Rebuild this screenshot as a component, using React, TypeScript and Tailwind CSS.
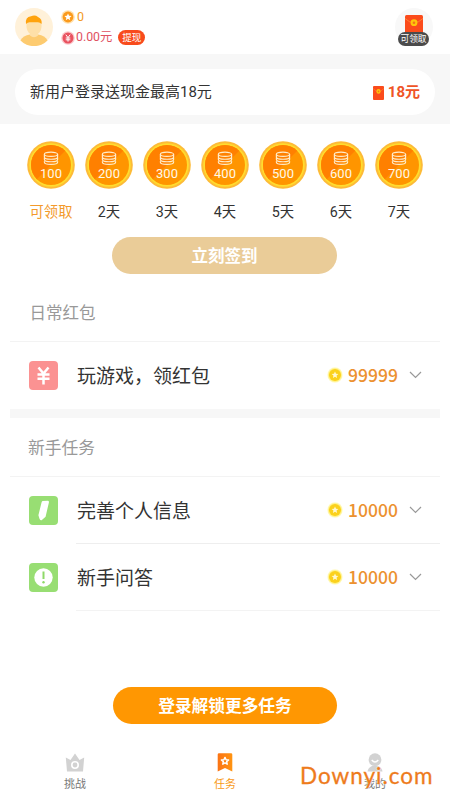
import type { ReactNode } from "react";
import clsx from "clsx";

const REWARDS = [
  { amount: 100, label: "可领取" },
  { amount: 200, label: "2天" },
  { amount: 300, label: "3天" },
  { amount: 400, label: "4天" },
  { amount: 500, label: "5天" },
  { amount: 600, label: "6天" },
  { amount: 700, label: "7天" },
];

const STAR = "M0 -5 L1.5 -1.7 L5 -1.4 L2.3 0.9 L3.1 4.4 L0 2.5 L-3.1 4.4 L-2.3 0.9 L-5 -1.4 L-1.5 -1.7 Z";

function Avatar() {
  return (
    <svg width="38" height="38" viewBox="0 0 38 38">
      <circle cx="19" cy="19" r="19" fill="#fff1d9" />
      <path d="M5.500 32.500 Q8 27.500 15 26.500 H23 Q30 27.500 32.500 32.500 A19 19 0 0 1 5.500 32.500Z" fill="#fdcb70" />
      <path d="M15 23 H23 V27.500 Q19 31 15 27.500Z" fill="#fee0a8" />
      <path d="M11.500 14 H26.500 V19 Q26 26 19 27 Q12 26 11.500 19Z" fill="#fee0a8" />
      <path d="M11 16 Q10 9 16 8.300 Q20 6.500 23 9 Q27.500 11 26.500 16 Q25 14.300 23 14.300 H14.500 Q12.500 14.500 11 16Z" fill="#ffa30d" />
    </svg>
  );
}

function StarCoin() {
  return (
    <svg width="14" height="14" viewBox="0 0 14 14" className="shrink-0">
      <circle cx="7" cy="7" r="6.800" fill="#ffe0ad" />
      <circle cx="7" cy="7" r="5.400" fill="#fb9a1b" />
      <path d={STAR} transform="translate(7 7) scale(.72)" fill="#fff" />
    </svg>
  );
}

function YellowCoin() {
  return (
    <svg width="16" height="16" viewBox="0 0 16 16" className="shrink-0">
      <circle cx="8" cy="8" r="7.700" fill="#fffac6" />
      <circle cx="8" cy="8" r="7" fill="#fff28a" />
      <circle cx="8" cy="8" r="6" fill="#fbd11c" />
      <path d={STAR} transform="translate(8 8) scale(.68)" fill="#fff8d0" />
    </svg>
  );
}

function YenCoin() {
  return (
    <svg width="14" height="14" viewBox="0 0 14 14" className="shrink-0">
      <circle cx="7" cy="7" r="6.800" fill="#fbc9cd" />
      <circle cx="7" cy="7" r="5.500" fill="#e95260" />
      <path d="M4.800 3.700 L7 6.600 L9.200 3.700 M7 6.600 V10.600 M4.700 7 H9.300 M4.700 8.800 H9.300" stroke="#fff" strokeWidth="1" fill="none" />
    </svg>
  );
}

function Envelope({ width, height }: { width: number; height: number }) {
  return (
    <svg width={width} height={height} viewBox="0 0 18 20" preserveAspectRatio="none" className="shrink-0">
      <rect width="18" height="20" rx="1.500" fill="#fb4b1b" />
      <path d="M0 3.500 Q9 12 18 3.500" stroke="#ff8a3c" strokeWidth=".8" fill="none" />
      <circle cx="9" cy="7.700" r="3.400" fill="#ffc60a" />
      <circle cx="9" cy="7.700" r="1.300" fill="#f5721b" />
    </svg>
  );
}

function RewardCoin({ amount }: { amount: number }) {
  return (
    <div className="relative h-12 w-12">
      <svg width="48" height="48" viewBox="0 0 48 48" className="block">
        <defs>
          <clipPath id={`coin-${amount}`}>
            <circle cx="24" cy="24" r="20" />
          </clipPath>
        </defs>
        <circle cx="24" cy="24" r="23.800" fill="#fdbb38" />
        <circle cx="24" cy="24" r="21.800" fill="#ffdc2e" />
        <circle cx="24" cy="24" r="20" fill="#ff9500" />
        <path d="M0 0 H48 L0 48Z" fill="#ff8000" clipPath={`url(#coin-${amount})`} />
        <g fill="none" stroke="#ffecc9" strokeWidth="1.200">
          <ellipse cx="24" cy="13.300" rx="6.600" ry="2.100" />
          <path d="M17.400 13.300 V16 C17.400 19 30.600 19 30.600 16 V13.300 M17.400 16.500 V18.500 C17.400 21.500 30.600 21.500 30.600 18.500 V16.500 M17.400 20.200 V21.200 C17.400 24.100 30.600 24.100 30.600 21.200 V20.200" />
        </g>
      </svg>
      <span className="absolute inset-x-0 top-[25px] text-center font-['Roboto',sans-serif] text-[13px] leading-4 text-[#fff8e8]">
        {amount}
      </span>
    </div>
  );
}

function YenIcon() {
  return (
    <svg width="29" height="29" viewBox="0 0 29 29">
      <rect width="29" height="29" rx="4" fill="#fb9292" />
      <path d="M9.500 6.500 L14.500 12.500 L19.500 6.500 M14.500 12.500 V23.500 M8.500 13.500 H20.500 M8.500 17.800 H20.500" stroke="#fff" strokeWidth="2.500" fill="none" />
    </svg>
  );
}

function PencilIcon() {
  return (
    <svg width="29" height="29" viewBox="0 0 29 29">
      <rect width="29" height="29" rx="4" fill="#98de73" />
      <path d="M13.600 5 L18.800 4.800 Q20.200 5 19.900 6.400 L16.600 20.700 L12.600 24.200 Q11.300 24.600 10.600 23 L9.400 19.300 L12.600 6.200 Q12.800 5.200 13.600 5Z" fill="#fff" />
    </svg>
  );
}

function NoticeIcon() {
  return (
    <svg width="29" height="29" viewBox="0 0 29 29">
      <rect width="29" height="29" rx="4" fill="#98de73" />
      <circle cx="14.500" cy="14.500" r="9.200" fill="#fff" />
      <path d="M14.500 8.500 V16" stroke="#8fd968" strokeWidth="2" />
      <circle cx="14.500" cy="19.300" r="1.200" fill="#8fd968" />
    </svg>
  );
}

interface TaskRowProps {
  icon: ReactNode;
  title: string;
  reward: string;
}

function TaskRow({ icon, title, reward }: TaskRowProps) {
  return (
    <div className="flex h-[66px] items-center pl-[18.5px] pr-[18px]">
      {icon}
      <span className="ml-[19.5px] flex-1 text-[19px] leading-7 text-[#333]">{title}</span>
      <YellowCoin />
      <span className="ml-[5px] w-[50px] text-[17.5px] font-medium leading-6 text-[#ec9130]">{reward}</span>
      <svg width="13" height="8" viewBox="0 0 13 8" className="ml-[11px]">
        <path d="M1 1 L6.500 6.500 L12 1" stroke="#999" strokeWidth="1.200" fill="none" />
      </svg>
    </div>
  );
}

function CrownIcon() {
  return (
    <svg width="20" height="19" viewBox="0 0 20 19">
      <path d="M.8 4.500 L5.500 7 L10 .5 L14.500 7 L19.200 4.500 L18 18.500 H2Z" fill="#d2d2d2" />
      <circle cx="10" cy="12" r="3.200" fill="none" stroke="#fff" strokeWidth="1.600" />
    </svg>
  );
}

function BookmarkIcon() {
  return (
    <svg width="16" height="19" viewBox="0 0 16 19">
      <defs>
        <linearGradient id="bookmark" x1="0" x2="1">
          <stop offset="0" stopColor="#fb7314" />
          <stop offset="1" stopColor="#ff9411" />
        </linearGradient>
      </defs>
      <path d="M2 .3 H14 Q15.300 .3 15.300 1.600 V18.600 L8 15 L.7 18.600 V1.600 Q.7 .3 2 .3Z" fill="url(#bookmark)" />
      <path d={STAR} transform="translate(8 8) scale(.72)" fill="none" stroke="#fff" strokeWidth="2" strokeLinejoin="round" />
    </svg>
  );
}

function ProfileIcon() {
  return (
    <svg width="18" height="19" viewBox="0 0 18 19">
      <circle cx="9" cy="6.700" r="6.400" fill="#d2d2d2" />
      <path d="M1.500 18.500 Q2 14.500 6 13 H12 Q16 14.500 16.500 18.500Z" fill="#d2d2d2" />
      <path d="M5.700 7 Q9 11 12.300 7" stroke="#fff" strokeWidth="1.300" fill="none" />
    </svg>
  );
}

function NavItem({ icon, label, active }: { icon: ReactNode; label: string; active?: boolean }) {
  return (
    <div className="flex flex-1 flex-col items-center">
      {icon}
      <span className={clsx("mt-[3px] text-[11px] leading-4", active ? "text-[#f99a16]" : "text-[#777]")}>{label}</span>
    </div>
  );
}

export default function App() {
  return (
    <div className="relative flex h-[800px] w-[450px] flex-col overflow-hidden bg-white font-['Noto_Sans_CJK_SC',sans-serif]">
      <header className="flex h-[54px] shrink-0 justify-between pl-[15px] pr-[17px] pt-2">
        <div className="flex">
          <Avatar />
          <div className="ml-2 flex flex-col font-['Roboto','Noto_Sans_CJK_SC',sans-serif]">
            <div className="flex h-[18px] items-center gap-[2px] text-[12.5px] text-[#f39a25]">
              <StarCoin />
              <span>0</span>
            </div>
            <div className="mt-[2px] flex h-[19px] items-center gap-px text-[12.3px] text-[#df5262]">
              <YenCoin />
              <span>0.00元</span>
              <span className="ml-[5px] flex h-[15px] w-[27px] items-center justify-center rounded-full bg-[#f84b1c] text-[9.5px] leading-none text-white">
                提现
              </span>
            </div>
          </div>
        </div>
        <div className="relative flex h-[38px] w-[38px] justify-center rounded-full bg-[#f8f8f8] pt-[7px]">
          <Envelope width={18} height={20} />
          <span className="absolute left-[3px] top-6 flex h-[14px] w-[31px] items-center justify-center rounded-full bg-[#4b4b4b] text-[8.7px] leading-none text-white">
            可领取
          </span>
        </div>
      </header>

      <section className="h-[70px] shrink-0 bg-[#f7f7f7] px-[15px] pt-[15px]">
        <div className="flex h-[46px] items-center justify-between rounded-full bg-white px-[15px] pt-px font-['Roboto','Noto_Sans_CJK_SC',sans-serif]">
          <span className="text-[15px] text-[#333]">新用户登录送现金最高18元</span>
          <span className="flex items-center gap-1 text-[15px] font-bold text-[#ef5427]">
            <Envelope width={11} height={14} />
            18元
          </span>
        </div>
      </section>

      <section className="flex shrink-0 flex-col items-center pt-[17px]">
        <div className="flex">
          {REWARDS.map((item, index) => (
            <div key={item.amount} className="flex w-[58px] flex-col items-center">
              <RewardCoin amount={item.amount} />
              <span
                className={clsx(
                  "mt-[13px] font-['Roboto','Noto_Sans_CJK_SC',sans-serif] text-[14.3px] leading-5",
                  index === 0 ? "text-[#f39a2b]" : "text-[#333]"
                )}
              >
                {item.label}
              </span>
            </div>
          ))}
        </div>
        <button className="mt-[15px] mr-px h-[37px] w-[225px] rounded-full bg-[#eacc98] text-[16.5px] font-bold text-white">立刻签到</button>
      </section>

      <main className="flex shrink-0 flex-col px-[10px] pt-[10px]">
        <h2 className="flex h-[57px] items-center pl-[19.5px] text-[16.5px] text-[#999]">日常红包</h2>
        <div className="h-px bg-[#f3f3f3]" />
        <TaskRow icon={<YenIcon />} title="玩游戏，领红包" reward="99999" />
        <div className="mt-px h-[9px] bg-[#f7f7f7]" />
        <h2 className="flex h-[58px] items-center pl-[18px] pt-[2px] text-[16.8px] text-[#999]">新手任务</h2>
        <div className="h-px bg-[#f3f3f3]" />
        <TaskRow icon={<PencilIcon />} title="完善个人信息" reward="10000" />
        <div className="ml-[66px] h-px bg-[#eee]" />
        <TaskRow icon={<NoticeIcon />} title="新手问答" reward="10000" />
        <div className="ml-[66px] h-px bg-[#f3f3f3]" />
      </main>

      <footer className="mt-auto flex shrink-0 flex-col items-center">
        <button className="h-[37px] w-[224px] rounded-full bg-[#ff9702] text-[16.7px] font-bold text-white">登录解锁更多任务</button>
        <nav className="mt-[29px] flex h-[47px] w-full">
          <NavItem icon={<CrownIcon />} label="挑战" />
          <NavItem icon={<BookmarkIcon />} label="任务" active />
          <NavItem icon={<ProfileIcon />} label="我的" />
        </nav>
      </footer>

      <span className="absolute left-[300px] top-[762px] whitespace-nowrap font-['Lato',sans-serif] text-[22.5px] leading-7 tracking-[1px] text-[#ee7b1c] [-webkit-text-stroke:0.3px_#ee7b1c] [text-shadow:0_0_2px_#fff,0_0_2px_#fff]">
        Downyi.com
      </span>
    </div>
  );
}
